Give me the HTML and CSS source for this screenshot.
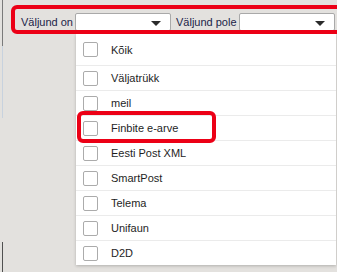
FILE: index.html
```html
<!DOCTYPE html>
<html lang="et">
<head>
    <meta charset="UTF-8">
    <title>Väljund</title>
    <link rel="stylesheet" href="styles.css">
</head>
<body>
    <div class="page">
        <div class="filters">
            <span class="filter-label label-on">Väljund on</span>
            <div class="select select-on"></div>
            <span class="filter-label label-pole">Väljund pole</span>
            <div class="select select-pole"></div>
        </div>

        <div class="dropdown">
            <div class="option option-first"><span class="check"></span><span class="option-text">Kõik</span></div>
            <div class="option"><span class="check"></span><span class="option-text">Väljatrükk</span></div>
            <div class="option"><span class="check"></span><span class="option-text">meil</span></div>
            <div class="option"><span class="check"></span><span class="option-text">Finbite e-arve</span></div>
            <div class="option"><span class="check"></span><span class="option-text">Eesti Post XML</span></div>
            <div class="option"><span class="check"></span><span class="option-text">SmartPost</span></div>
            <div class="option"><span class="check"></span><span class="option-text">Telema</span></div>
            <div class="option"><span class="check"></span><span class="option-text">Unifaun</span></div>
            <div class="option option-last"><span class="check"></span><span class="option-text">D2D</span></div>
        </div>

        <!-- highlight marks drawn over the screenshot -->
        <div class="mark mark-filters"></div>
        <div class="mark mark-row"></div>
    </div>
</body>
</html>
```

FILE: styles.css
```css
body {
    margin: 0;
    padding: 0;
    font-family: "Liberation Sans", Arial, sans-serif;
    font-size: 11px;
    color: #222;
    background:
        linear-gradient(#7a7a7a 0 46px, #c8d2de 46px 118px, transparent 118px 242px, #505050 242px) 2px 0 / 1px 100% no-repeat,
        #e3e1de;
    height: 272px;
    overflow: hidden;
}

.page {
    position: relative;
    height: 272px;
    overflow: hidden;
}

/* Top filter bar */
.filters {
    display: flex;
    align-items: center;
    height: 18px;
    padding: 13px 0 3px 21px;
}

.filter-label {
    color: #1b2348;
    white-space: nowrap;
}

.label-on {
    width: 54px;
}

.label-pole {
    width: 63px;
    margin-left: 5px;
}

.select {
    position: relative;
    width: 94px;
    height: 16px;
    background: #fff;
    border: 1px solid #a9a9a9;
    border-radius: 2px;
}

.select:after {
    content: '';
    position: absolute;
    top: 7px;
    right: 9px;
    border-left: 5px solid transparent;
    border-right: 5px solid transparent;
    border-top: 5px solid #2b2b2b;
}

/* Dropdown list */
.dropdown {
    width: 260px;
    margin-left: 76px;
    background: #fff;
    box-shadow: 0 1px 3px rgba(0, 0, 0, 0.22);
}

.option {
    display: flex;
    align-items: center;
    height: 24px;
    padding-left: 7px;
    border-bottom: 1px solid #ebebeb;
}

.option-first {
    height: 31px;
}

.option-last {
    border-bottom: none;
}

.check {
    width: 13px;
    height: 13px;
    border: 1px solid #ababab;
    border-radius: 2px;
    background: #fff;
    flex-shrink: 0;
}

.option-text {
    margin-left: 13px;
    color: #1e1e1e;
}

/* Red highlight marks */
.mark {
    position: absolute;
    border: 4px solid #ec0016;
    border-radius: 6px;
}

.mark-filters {
    left: 11px;
    top: 5px;
    right: -12px;
    height: 21px;
}

.mark-row {
    left: 77px;
    top: 111px;
    width: 131px;
    height: 24px;
}
```
